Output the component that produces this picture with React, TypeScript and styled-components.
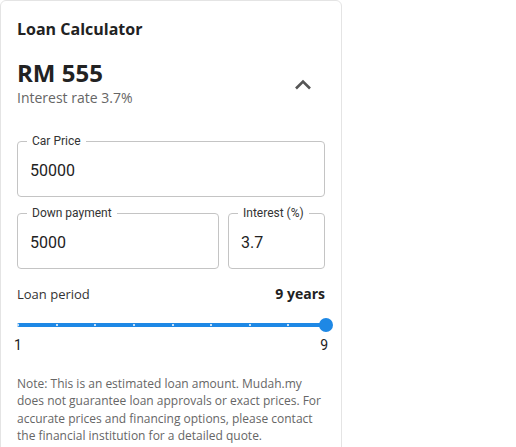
import React from "react";
import styled, { createGlobalStyle } from "styled-components";

const GlobalStyle = createGlobalStyle`
    body {
        margin: 0;
        background: #ffffff;
        font-family: "Open Sans", "Liberation Sans", sans-serif;
    }
`;

const Card = styled.div`
    width: 342px;
    box-sizing: border-box;
    border: 1px solid #e4e4e4;
    border-radius: 6px;
    padding: 16px;
    background: #ffffff;
`;

const Title = styled.h2`
    margin: 0;
    font-size: 16px;
    line-height: 24px;
    font-weight: 700;
    color: #222222;
`;

const SummaryRow = styled.div`
    display: flex;
    align-items: center;
    justify-content: space-between;
    margin-top: 17px;
`;

const Amount = styled.div`
    font-size: 24px;
    line-height: 30px;
    font-weight: 700;
    color: #222222;
`;

const Rate = styled.div`
    font-size: 14px;
    line-height: 20px;
    color: #666666;
`;

const ToggleButton = styled.button`
    border: none;
    background: none;
    padding: 0;
    margin-right: 8px;
    margin-top: 4px;
    width: 28px;
    height: 28px;
    display: flex;
    align-items: center;
    justify-content: center;
    cursor: pointer;
`;

const Fields = styled.div`
    display: grid;
    grid-template-columns: 1fr 97px;
    column-gap: 9px;
    row-gap: 9px;
    margin-top: 26px;
`;

const Field = styled.fieldset<{ $span?: boolean }>`
    grid-column: ${props => (props.$span ? "1 / -1" : "auto")};
    margin: 0;
    padding: 0 12px;
    height: 63px;
    box-sizing: border-box;
    border: 1px solid #c4c4c4;
    border-radius: 4px;
    min-width: 0;
    font-family: Roboto, "Liberation Sans", sans-serif;
`;

const Legend = styled.legend`
    padding: 0 5px;
    margin-left: -3px;
    font-size: 12px;
    line-height: 14px;
    color: #333333;
`;

const Value = styled.div`
    font-size: 16px;
    line-height: 20px;
    color: #222222;
    margin-top: 13px;
`;

const PeriodRow = styled.div`
    display: flex;
    justify-content: space-between;
    align-items: center;
    margin-top: 15px;
`;

const PeriodLabel = styled.span`
    font-size: 13px;
    line-height: 20px;
    color: #333333;
`;

const PeriodValue = styled.span`
    font-size: 14px;
    line-height: 20px;
    font-weight: 700;
    color: #222222;
`;

const SliderTrack = styled.div`
    position: relative;
    margin-top: 19px;
    width: 309px;
    height: 4px;
    background: #1e88e5;
    border-radius: 2px;
`;

const Tick = styled.span`
    position: absolute;
    top: 1px;
    width: 2px;
    height: 2px;
    background: #c9e1f7;
`;

const Thumb = styled.span`
    position: absolute;
    top: -5px;
    right: -7px;
    width: 14px;
    height: 14px;
    border-radius: 50%;
    background: #1e88e5;
`;

const SliderLabels = styled.div`
    display: flex;
    justify-content: space-between;
    margin-top: 10px;
    width: 314px;
    margin-left: -3px;
    font-family: Roboto, "Liberation Sans", sans-serif;
    font-size: 14px;
    line-height: 16px;
    color: #222222;
`;

const Note = styled.p`
    margin: 22px 0 0 0;
    font-size: 12px;
    line-height: 17.3px;
    color: #666666;
`;

const ticks = [0, 1, 2, 3, 4, 5, 6, 7];

export default function App() {
    return (
        <>
            <GlobalStyle />
            <Card>
                <Title>Loan Calculator</Title>
                <SummaryRow>
                    <div>
                        <Amount>RM 555</Amount>
                        <Rate>Interest rate 3.7%</Rate>
                    </div>
                    <ToggleButton aria-label="Collapse">
                        <svg width="20" height="20" viewBox="0 0 20 20">
                            <polyline points="3,13.5 10,6.5 17,13.5" fill="none" stroke="#555555" strokeWidth="2.6" />
                        </svg>
                    </ToggleButton>
                </SummaryRow>
                <Fields>
                    <Field $span>
                        <Legend>Car Price</Legend>
                        <Value>50000</Value>
                    </Field>
                    <Field>
                        <Legend>Down payment</Legend>
                        <Value>5000</Value>
                    </Field>
                    <Field>
                        <Legend>Interest (%)</Legend>
                        <Value>3.7</Value>
                    </Field>
                </Fields>
                <PeriodRow>
                    <PeriodLabel>Loan period</PeriodLabel>
                    <PeriodValue>9 years</PeriodValue>
                </PeriodRow>
                <SliderTrack>
                    {ticks.map(i => (
                        <Tick key={i} style={{ left: `${(i * 309) / 8}px` }} />
                    ))}
                    <Thumb />
                </SliderTrack>
                <SliderLabels>
                    <span>1</span>
                    <span>9</span>
                </SliderLabels>
                <Note>
                    Note: This is an estimated loan amount. Mudah.my does not guarantee loan approvals or exact prices. For
                    accurate prices and financing options, please contact the financial institution for a detailed quote.
                </Note>
            </Card>
        </>
    );
}
